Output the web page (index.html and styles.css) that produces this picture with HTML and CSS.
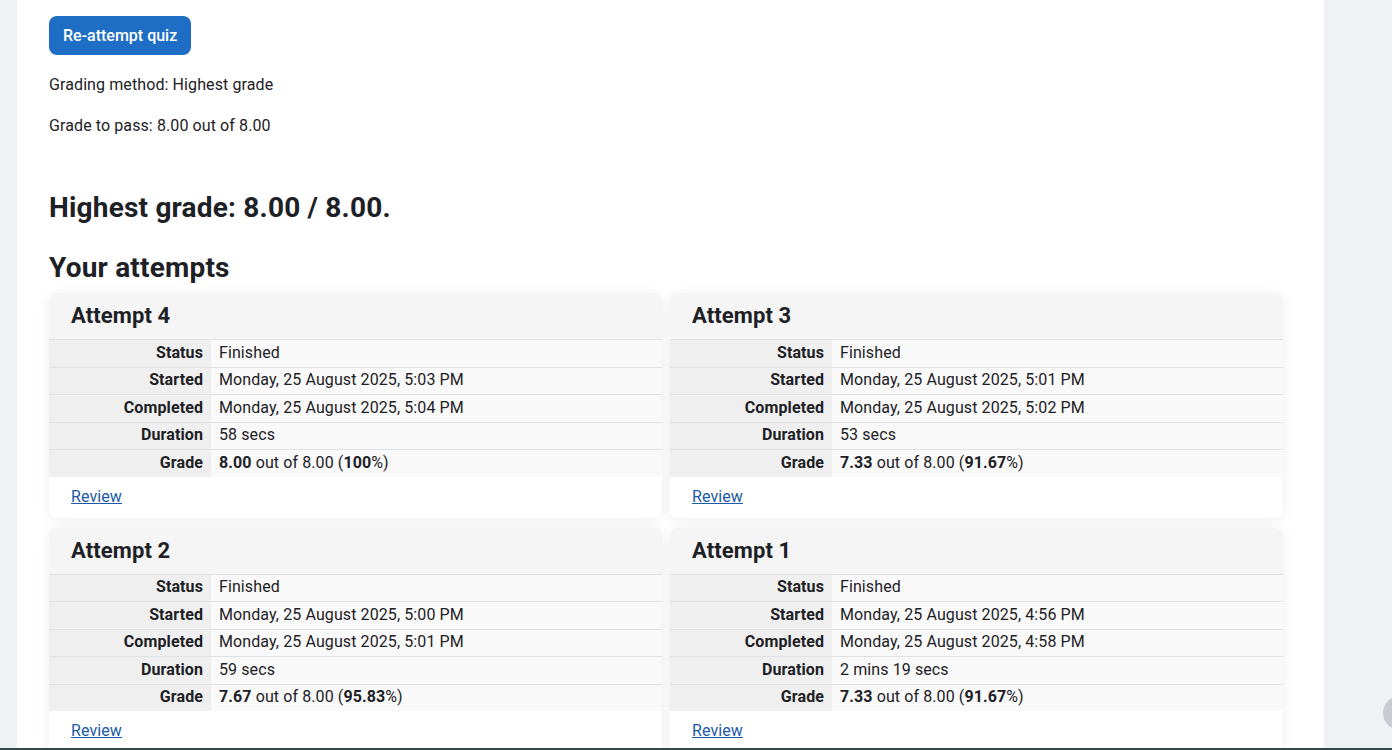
FILE: index.html
```html
<!DOCTYPE html>
<html lang="en">
<head>
  <meta charset="UTF-8" />
  <meta name="viewport" content="width=device-width, initial-scale=1" />
  <title>Quiz summary</title>
  <link rel="stylesheet" href="styles.css">
</head>

<body>
  <div class="page">
    <main class="region-main">
      <div class="quizinfo">
        <button class="btn-primary" type="button">Re-attempt quiz</button>
        <p>Grading method: Highest grade</p>
        <p>Grade to pass: 8.00 out of 8.00</p>
      </div>

      <h3 class="overall">Highest grade: 8.00 / 8.00.</h3>

      <h3 class="attempts-title">Your attempts</h3>

      <div class="attempts">
        <!-- Attempt 4 -->
        <section class="attempt-card">
          <h4 class="attempt-head">Attempt 4</h4>
          <table class="attempt-table">
            <tr><th>Status</th><td>Finished</td></tr>
            <tr><th>Started</th><td>Monday, 25 August 2025, 5:03 PM</td></tr>
            <tr><th>Completed</th><td>Monday, 25 August 2025, 5:04 PM</td></tr>
            <tr><th>Duration</th><td>58 secs</td></tr>
            <tr><th>Grade</th><td><b>8.00</b> out of 8.00 (<b>100</b>%)</td></tr>
          </table>
          <div class="attempt-foot"><a href="#">Review</a></div>
        </section>

        <!-- Attempt 3 -->
        <section class="attempt-card">
          <h4 class="attempt-head">Attempt 3</h4>
          <table class="attempt-table">
            <tr><th>Status</th><td>Finished</td></tr>
            <tr><th>Started</th><td>Monday, 25 August 2025, 5:01 PM</td></tr>
            <tr><th>Completed</th><td>Monday, 25 August 2025, 5:02 PM</td></tr>
            <tr><th>Duration</th><td>53 secs</td></tr>
            <tr><th>Grade</th><td><b>7.33</b> out of 8.00 (<b>91.67</b>%)</td></tr>
          </table>
          <div class="attempt-foot"><a href="#">Review</a></div>
        </section>

        <!-- Attempt 2 -->
        <section class="attempt-card">
          <h4 class="attempt-head">Attempt 2</h4>
          <table class="attempt-table">
            <tr><th>Status</th><td>Finished</td></tr>
            <tr><th>Started</th><td>Monday, 25 August 2025, 5:00 PM</td></tr>
            <tr><th>Completed</th><td>Monday, 25 August 2025, 5:01 PM</td></tr>
            <tr><th>Duration</th><td>59 secs</td></tr>
            <tr><th>Grade</th><td><b>7.67</b> out of 8.00 (<b>95.83</b>%)</td></tr>
          </table>
          <div class="attempt-foot"><a href="#">Review</a></div>
        </section>

        <!-- Attempt 1 -->
        <section class="attempt-card">
          <h4 class="attempt-head">Attempt 1</h4>
          <table class="attempt-table">
            <tr><th>Status</th><td>Finished</td></tr>
            <tr><th>Started</th><td>Monday, 25 August 2025, 4:56 PM</td></tr>
            <tr><th>Completed</th><td>Monday, 25 August 2025, 4:58 PM</td></tr>
            <tr><th>Duration</th><td>2 mins 19 secs</td></tr>
            <tr><th>Grade</th><td><b>7.33</b> out of 8.00 (<b>91.67</b>%)</td></tr>
          </table>
          <div class="attempt-foot"><a href="#">Review</a></div>
        </section>
      </div>
    </main>
  </div>

  <!-- drawer toggle peeking in from the right edge -->
  <div class="drawer-toggle"></div>
  <div class="taskbar-edge"></div>
</body>
</html>
```

FILE: styles.css
```css
body {
  margin: 0;
  background-color: #eff1f5;
  font-family: Roboto, "Liberation Sans", sans-serif;
  font-size: 16px;
  letter-spacing: 0.1px;
  color: #1d2125;
  overflow: hidden;
}

.page {
  padding-left: 17px;
}

/* === White main column === */
.region-main {
  width: 1307px;
  box-sizing: border-box;
  min-height: 100vh;
  background-color: #fff;
  padding: 16px 32px 40px;
}

.quizinfo p {
  margin: 17px 0 0;
  line-height: 24px;
}

.quizinfo p:first-of-type {
  margin-top: 18px;
}

.btn-primary {
  font-family: Roboto, "Liberation Sans", sans-serif;
  font-size: 16px;
  font-weight: 500;
  color: #fff;
  background-color: #1d6ec4;
  border: none;
  border-radius: 8px;
  height: 39px;
  padding: 0 14px;
  cursor: pointer;
}

h3 {
  font-size: 28px;
  font-weight: 700;
  line-height: 34px;
  letter-spacing: 0.2px;
  margin: 0;
}

.overall {
  margin-top: 53px;
}

.attempts-title {
  margin-top: 26px;
}

/* === Attempt cards === */
.attempts {
  display: grid;
  grid-template-columns: 613px 613px;
  column-gap: 8px;
  row-gap: 10px;
  margin-top: 8px;
}

.attempt-card {
  background-color: #fff;
  border-radius: 8px;
  box-shadow: 0 2px 14px rgba(0, 0, 0, 0.07);
  overflow: hidden;
}

.attempt-head {
  margin: 0;
  padding: 10px 22px;
  font-size: 22px;
  font-weight: 700;
  line-height: 26px;
  background-color: #f5f5f5;
}

.attempt-table {
  width: 100%;
  border-collapse: collapse;
}

.attempt-table th,
.attempt-table td {
  border-top: 1px solid #dee2e6;
  padding: 0.5px 8px 3px;
  line-height: 23px;
  font-size: 16px;
  text-align: left;
  vertical-align: top;
}

.attempt-table th {
  width: 146px;
  text-align: right;
  font-weight: 700;
  background-color: #efefef;
}

.attempt-table td {
  background-color: #f9f9f9;
}

.attempt-table b {
  font-weight: 700;
}

.attempt-foot {
  padding: 9px 22px 10px;
  line-height: 22px;
}

.attempt-foot a {
  color: #1a5aa6;
  text-decoration: underline;
}

/* === Overlays on the viewport edge === */
.drawer-toggle {
  position: fixed;
  left: 1383px;
  top: 696px;
  width: 34px;
  height: 34px;
  border-radius: 50%;
  background-color: #c9cdd3;
}

.taskbar-edge {
  position: fixed;
  left: 0;
  right: 0;
  bottom: 0;
  height: 2px;
  background-color: #33474c;
}
```
